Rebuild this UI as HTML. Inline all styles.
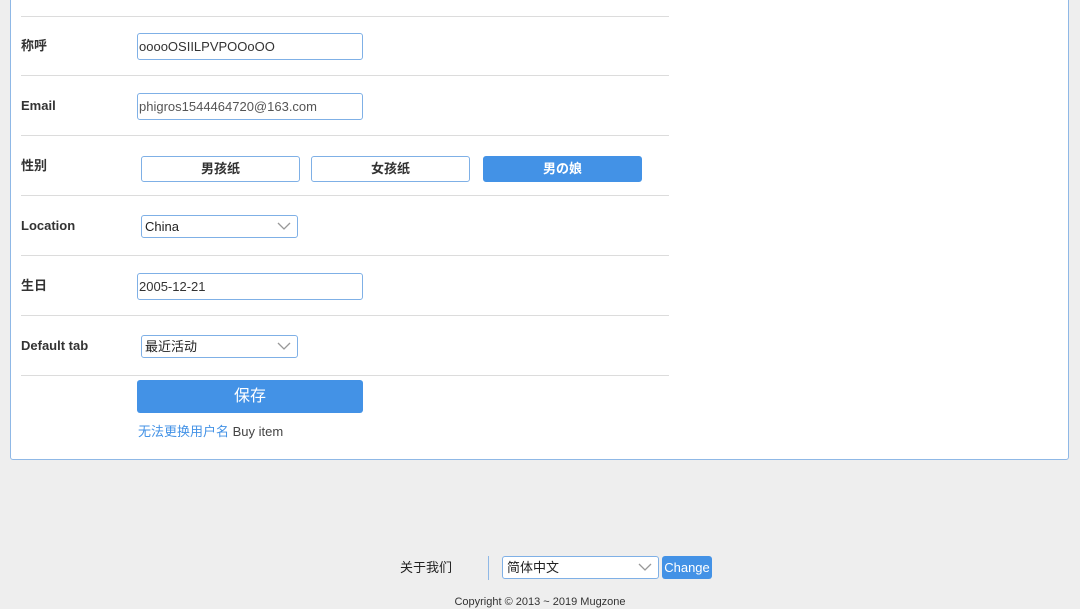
<!DOCTYPE html>
<html><head><meta charset="utf-8"><style>
*{box-sizing:border-box;margin:0;padding:0}
body{width:1080px;height:608px;background:#eeeeee;font-family:"Liberation Sans","Noto Sans CJK SC",sans-serif;color:#333;position:relative;overflow:hidden}
.panel{position:absolute;left:10px;top:-10px;width:1059px;height:470px;background:#fff;border:1px solid #8fb8e6;border-radius:3px}
.a{position:absolute}
.sep{position:absolute;left:21px;width:648px;height:1px;background:#dcdcdc}
.lbl{position:absolute;left:21px;font-size:13px;font-weight:bold;color:#333;line-height:16px}
.inp{position:absolute;left:137px;width:226px;height:27px;border:1px solid #7fb0e6;border-radius:3px;font-size:13px;line-height:25px;padding-left:1px;color:#333}
.btn{position:absolute;top:156px;height:26px;border:1px solid #7fb0e6;border-radius:3px;font-size:13px;font-weight:bold;text-align:center;line-height:24px;color:#333;background:#fff}
.sel{position:absolute;left:141px;width:157px;height:23px;border:1px solid #7fb0e6;border-radius:3px;font-size:13px;line-height:21px;padding-left:3px;color:#222;background:#fff}
.chev{position:absolute;right:6px;top:5px}
</style></head><body>
<div class="panel"></div>
<div class="sep" style="top:16px"></div>
<div class="sep" style="top:75px"></div>
<div class="sep" style="top:135px"></div>
<div class="sep" style="top:195px"></div>
<div class="sep" style="top:255px"></div>
<div class="sep" style="top:315px"></div>
<div class="sep" style="top:375px"></div>
<div class="lbl" style="top:38px">称呼</div>
<div class="lbl" style="top:98px">Email</div>
<div class="lbl" style="top:158px">性别</div>
<div class="lbl" style="top:218px">Location</div>
<div class="lbl" style="top:278px">生日</div>
<div class="lbl" style="top:338px">Default tab</div>
<div class="inp" style="top:33px">ooooOSIILPVPOOoOO</div>
<div class="inp" style="top:93px;color:#555">phigros1544464720@163.com</div>
<div class="btn" style="left:141px;width:159px">男孩纸</div>
<div class="btn" style="left:311px;width:159px">女孩纸</div>
<div class="btn" style="left:483px;width:159px;background:#4392e6;border-color:#4392e6;color:#fff">男の娘</div>
<div class="sel" style="top:215px">China<svg class="chev" width="14" height="10"><path d="M1 2 L7 8 L13 2" fill="none" stroke="#999" stroke-width="1.3"/></svg></div>
<div class="inp" style="top:273px">2005-12-21</div>
<div class="sel" style="top:335px">最近活动<svg class="chev" width="14" height="10"><path d="M1 2 L7 8 L13 2" fill="none" stroke="#999" stroke-width="1.3"/></svg></div>
<div class="a" style="left:137px;top:380px;width:226px;height:33px;background:#4392e6;border-radius:3px;color:#fff;font-size:16px;text-align:center;line-height:33px">保存</div>
<div class="a" style="left:138px;top:424px;font-size:13px;line-height:16px"><span style="color:#4392e6">无法更换用户名</span> <span style="color:#444">Buy item</span></div>
<div class="a" style="left:400px;top:560px;font-size:13px;line-height:16px;color:#222">关于我们</div>
<div class="a" style="left:488px;top:556px;width:1px;height:24px;background:#8fb8e6"></div>
<div class="a" style="left:502px;top:556px;width:157px;height:23px;border:1px solid #7fb0e6;border-radius:3px;background:#fff;font-size:13px;line-height:21px;padding-left:4px;color:#222">简体中文<svg class="chev" width="14" height="10"><path d="M1 2 L7 8 L13 2" fill="none" stroke="#999" stroke-width="1.3"/></svg></div>
<div class="a" style="left:662px;top:556px;width:50px;height:23px;background:#4392e6;border-radius:3px;color:#fff;font-size:13px;line-height:23px;text-align:center">Change</div>
<div class="a" style="left:0;width:1080px;top:595px;text-align:center;font-size:11px;line-height:14px;color:#333">Copyright © 2013 ~ 2019 Mugzone</div>
</body></html>
